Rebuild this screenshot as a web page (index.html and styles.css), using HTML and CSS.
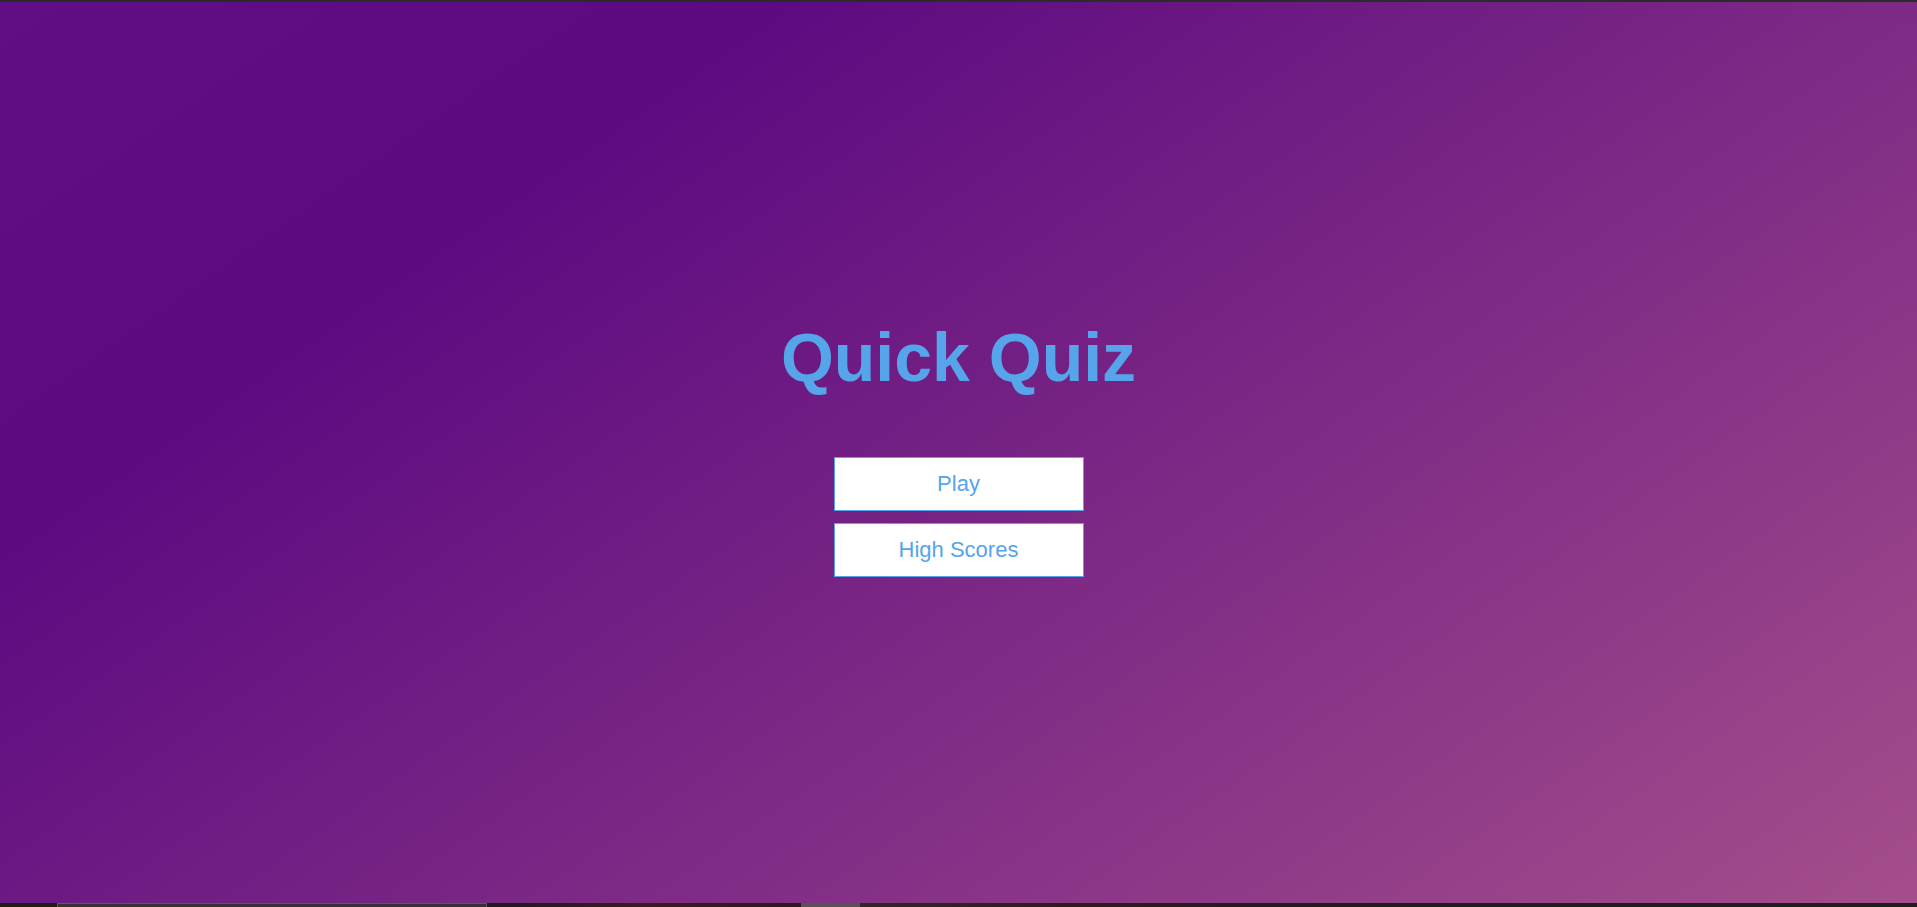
FILE: index.html
```html
<!DOCTYPE html>
<html lang="en">
<head>
<meta charset="utf-8">
<title>Quick Quiz</title>
<link rel="stylesheet" href="styles.css">
</head>
<body>
  <div class="topbar"></div>
  <main class="stage">
    <div class="home">
      <h1 class="title">Quick Quiz</h1>
      <a class="btn" href="#">Play</a>
      <a class="btn" href="#">High Scores</a>
    </div>
  </main>
  <div class="taskbar">
    <span class="tb-seg tb-start"></span>
    <span class="tb-seg tb-search"></span>
    <span class="tb-seg tb-gap"></span>
    <span class="tb-seg tb-app"></span>
    <span class="tb-seg tb-rest"></span>
  </div>
</body>
</html>
```

FILE: styles.css
```css
html, body {
  margin: 0;
  padding: 0;
  height: 100%;
}

body {
  display: flex;
  flex-direction: column;
  font-family: "Liberation Sans", Arial, sans-serif;
  background: #1e1e1e;
  overflow: hidden;
}

.topbar {
  height: 2px;
  flex: none;
  background: #2b2b2b;
}

.stage {
  flex: 1;
  display: flex;
  align-items: center;
  justify-content: center;
  background: linear-gradient(145deg, #5f0e86 0%, #5c0a81 24%, #a44e8b 100%);
}

.home {
  display: flex;
  flex-direction: column;
  align-items: center;
}

.title {
  margin: 0 0 58.4px 0;
  font-size: 68px;
  font-weight: bold;
  color: #56a5eb;
  line-height: 83px;
}

.btn {
  box-sizing: border-box;
  width: 250px;
  height: 54px;
  margin-bottom: 12px;
  display: flex;
  align-items: center;
  justify-content: center;
  font-size: 22px;
  color: #56a5eb;
  background: #ffffff;
  border: 1px solid #56a5eb;
  text-decoration: none;
}

.taskbar {
  height: 4px;
  flex: none;
  display: flex;
  background: #1c1c1c;
}

.tb-seg {
  height: 100%;
}

.tb-start {
  width: 57px;
  background: #1d1d1d;
}

.tb-search {
  width: 430px;
  box-sizing: border-box;
  background: #333333;
  border-top: 1px solid #5a5a5a;
  border-left: 1px solid #5a5a5a;
  border-right: 1px solid #5a5a5a;
}

.tb-gap {
  width: 314px;
  background: linear-gradient(90deg, #1c1c1c 0%, #3a1c1c 50%, #2a1a1a 100%);
}

.tb-app {
  width: 59px;
  background: #555555;
}

.tb-rest {
  flex: 1;
  background: linear-gradient(90deg, #2c2a26 0%, #2e1c1c 20%, #1e1e1e 40%, #1e1e1e 100%);
}
```
